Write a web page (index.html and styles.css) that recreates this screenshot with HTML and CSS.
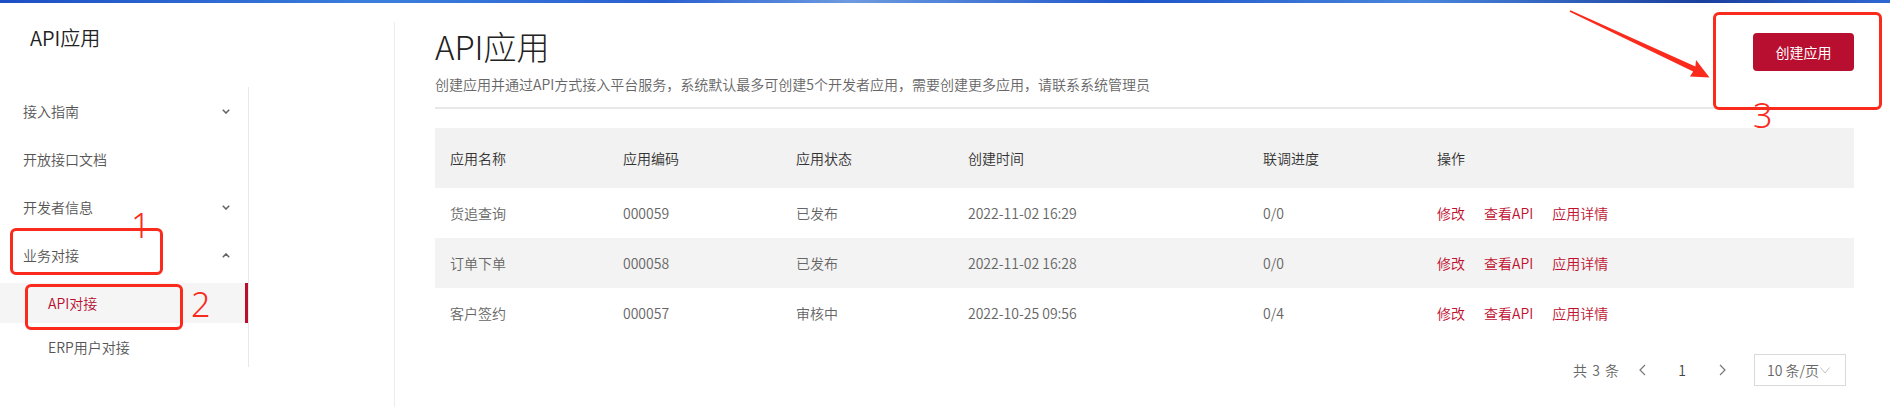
FILE: index.html
```html
<!DOCTYPE html>
<html lang="zh-CN">
<head>
    <meta charset="UTF-8">
    <meta name="viewport" content="width=device-width, initial-scale=1.0">
    <title>API应用</title>
    <link rel="stylesheet" href="styles.css">
</head>
<body>
    <div class="banner"></div>
    <div class="layout">
        <aside class="aside">
            <div class="aside-title">API应用</div>
            <ul class="menu">
                <li class="menu-item">接入指南
                    <svg class="chev" viewBox="0 0 8 5"><path d="M0.8 0.8 L4 4 L7.2 0.8"/></svg>
                </li>
                <li class="menu-item">开放接口文档</li>
                <li class="menu-item">开发者信息
                    <svg class="chev" viewBox="0 0 8 5"><path d="M0.8 0.8 L4 4 L7.2 0.8"/></svg>
                </li>
                <li class="menu-item">业务对接
                    <svg class="chev" viewBox="0 0 8 5"><path d="M0.8 4.2 L4 1 L7.2 4.2"/></svg>
                </li>
                <li class="menu-sub active">API对接</li>
                <li class="menu-sub">ERP用户对接</li>
            </ul>
        </aside>

        <main class="main">
            <div class="page-head">
                <div>
                    <h1>API应用</h1>
                    <p class="desc">创建应用并通过API方式接入平台服务，系统默认最多可创建5个开发者应用，需要创建更多应用，请联系系统管理员</p>
                </div>
                <button class="btn-create" type="button">创建应用</button>
            </div>

            <table class="app-table">
                <colgroup>
                    <col style="width:173px">
                    <col style="width:173px">
                    <col style="width:172px">
                    <col style="width:295px">
                    <col style="width:174px">
                    <col>
                </colgroup>
                <thead>
                    <tr>
                        <th>应用名称</th>
                        <th>应用编码</th>
                        <th>应用状态</th>
                        <th>创建时间</th>
                        <th>联调进度</th>
                        <th>操作</th>
                    </tr>
                </thead>
                <tbody>
                    <tr>
                        <td>货追查询</td>
                        <td>000059</td>
                        <td>已发布</td>
                        <td>2022-11-02 16:29</td>
                        <td>0/0</td>
                        <td class="ops"><a>修改</a><a>查看API</a><a>应用详情</a></td>
                    </tr>
                    <tr>
                        <td>订单下单</td>
                        <td>000058</td>
                        <td>已发布</td>
                        <td>2022-11-02 16:28</td>
                        <td>0/0</td>
                        <td class="ops"><a>修改</a><a>查看API</a><a>应用详情</a></td>
                    </tr>
                    <tr>
                        <td>客户签约</td>
                        <td>000057</td>
                        <td>审核中</td>
                        <td>2022-10-25 09:56</td>
                        <td>0/4</td>
                        <td class="ops"><a>修改</a><a>查看API</a><a>应用详情</a></td>
                    </tr>
                </tbody>
            </table>

            <div class="pager">
                <span class="total">共 3 条</span>
                <span class="pg-btn"><svg viewBox="0 0 7 12"><path d="M6 1 L1 6 L6 11"/></svg></span>
                <span class="pg-btn pg-num">1</span>
                <span class="pg-btn"><svg viewBox="0 0 7 12"><path d="M1 1 L6 6 L1 11"/></svg></span>
                <span class="pg-size">10 条/页<svg viewBox="0 0 10 7"><path d="M0.5 0.5 L5 6 L9.5 0.5"/></svg></span>
            </div>
        </main>
    </div>

    <!-- annotation marks drawn on the screenshot -->
    <div class="mark mark-1"></div>
    <div class="mark-num num-1">1</div>
    <div class="mark mark-2"></div>
    <div class="mark-num num-2">2</div>
    <div class="mark mark-3"></div>
    <div class="mark-num num-3">3</div>
    <svg class="mark-arrow" viewBox="0 0 160 90">
        <polygon points="10.4,10.2 135.4,66.4 136,60 149.5,77.5 130,76.5 133.2,71.6 9.6,11.8"/>
    </svg>
</body>
</html>
```

FILE: styles.css
```css
body {
    margin: 0;
    font-family: "Noto Sans CJK SC", "Noto Sans", sans-serif;
    font-size: 14px;
    font-weight: 350;
    color: #333;
    background: #fff;
    width: 1890px;
    height: 407px;
    overflow: hidden;
    position: relative;
}
.banner {
    height: 3px;
    background: linear-gradient(90deg, #1d4fc4, #3b7fdc 20%, #2a5fd0 35%, #6d9be0 45%, #1e55c9 60%, #4a86dc 75%, #1a3f9e 90%, #2f68d2);
}
.layout {
    display: flex;
    margin-top: 19px;
    height: 385px;
}
.aside {
    width: 394px;
    flex: none;
    border-right: 1px solid #ececec;
}
.aside-title {
    font-size: 20px;
    line-height: 32px;
    padding-left: 30px;
    color: #222;
}
.menu {
    list-style: none;
    margin: 33px 0 0 0;
    padding: 0;
    width: 248px;
    border-right: 1px solid #e8e8e8;
    color: #555;
}
.menu-item {
    height: 48px;
    display: flex;
    align-items: center;
    justify-content: space-between;
    padding: 0 18px 0 23px;
}
.chev {
    width: 8px;
    height: 5px;
    fill: none;
    stroke: #666;
    stroke-width: 1.6;
}
.menu-sub {
    height: 40px;
    margin: 4px 0;
    display: flex;
    align-items: center;
    padding-left: 48px;
}
.menu-sub.active {
    background: #f5f5f5;
    color: #b80e30;
    box-shadow: inset -3px 0 0 #b80e30;
}
.main {
    flex: 1;
    padding: 4px 36px 0 40px;
}
.page-head {
    display: flex;
    justify-content: space-between;
    align-items: flex-start;
    border-bottom: 2px solid #e8e8e8;
    padding-bottom: 13px;
}
.page-head h1 {
    margin: 0;
    font-size: 33px;
    line-height: 40px;
    font-weight: 300;
    color: #222;
}
.desc {
    margin: 8px 0 0 0;
    line-height: 20px;
    color: #666;
}
.btn-create {
    margin-top: 7px;
    width: 101px;
    height: 38px;
    border: none;
    border-radius: 4px;
    background: #b80e30;
    color: #fff;
    font-family: inherit;
    font-size: 14px;
}
.app-table {
    margin-top: 19px;
    width: 100%;
    border-collapse: collapse;
    table-layout: fixed;
}
.app-table th {
    background: #f2f2f2;
    height: 60px;
    padding: 0 15px;
    text-align: left;
    font-weight: 350;
    color: #333;
}
.app-table td {
    height: 50px;
    padding: 0 15px;
    color: #666;
}
.app-table tbody tr:nth-child(2) td {
    background: #f3f3f3;
}
.ops a {
    color: #c0102f;
    margin-right: 19px;
}
.pager {
    display: flex;
    justify-content: flex-end;
    align-items: center;
    margin: 16px 8px 0 0;
    color: #666;
}
.total {
    margin-right: 3px;
    word-spacing: 2px;
}
.pg-btn {
    width: 40px;
    height: 32px;
    display: flex;
    align-items: center;
    justify-content: center;
    color: #444;
}
.pg-btn svg {
    width: 7px;
    height: 12px;
    fill: none;
    stroke: #777;
    stroke-width: 1.2;
}
.pg-size {
    margin-left: 12px;
    width: 92px;
    height: 32px;
    box-sizing: border-box;
    border: 1px solid #d9d9d9;
    display: flex;
    align-items: center;
    padding-left: 12px;
}
.pg-size svg {
    width: 10px;
    height: 7px;
    margin-left: 1px;
    fill: none;
    stroke: #c4c4c4;
    stroke-width: 1;
}
.mark {
    position: absolute;
    border: 3px solid #fa2a1c;
    border-radius: 6px;
    box-sizing: border-box;
}
.mark-1 {
    left: 10px;
    top: 228px;
    width: 153px;
    height: 47px;
}
.mark-2 {
    left: 25px;
    top: 284px;
    width: 158px;
    height: 46px;
}
.mark-3 {
    left: 1713px;
    top: 12px;
    width: 169px;
    height: 98px;
}
.mark-num {
    position: absolute;
    color: #fa2a1c;
    font-family: "Noto Sans", sans-serif;
    font-weight: 300;
    font-size: 34px;
    line-height: 34px;
}
.num-1 {
    left: 131px;
    top: 208px;
}
.num-2 {
    left: 191px;
    top: 287px;
}
.num-3 {
    left: 1753px;
    top: 98px;
}
.mark-arrow {
    position: absolute;
    left: 1560px;
    top: 0;
    width: 160px;
    height: 90px;
    fill: #fa2a1c;
}
```
